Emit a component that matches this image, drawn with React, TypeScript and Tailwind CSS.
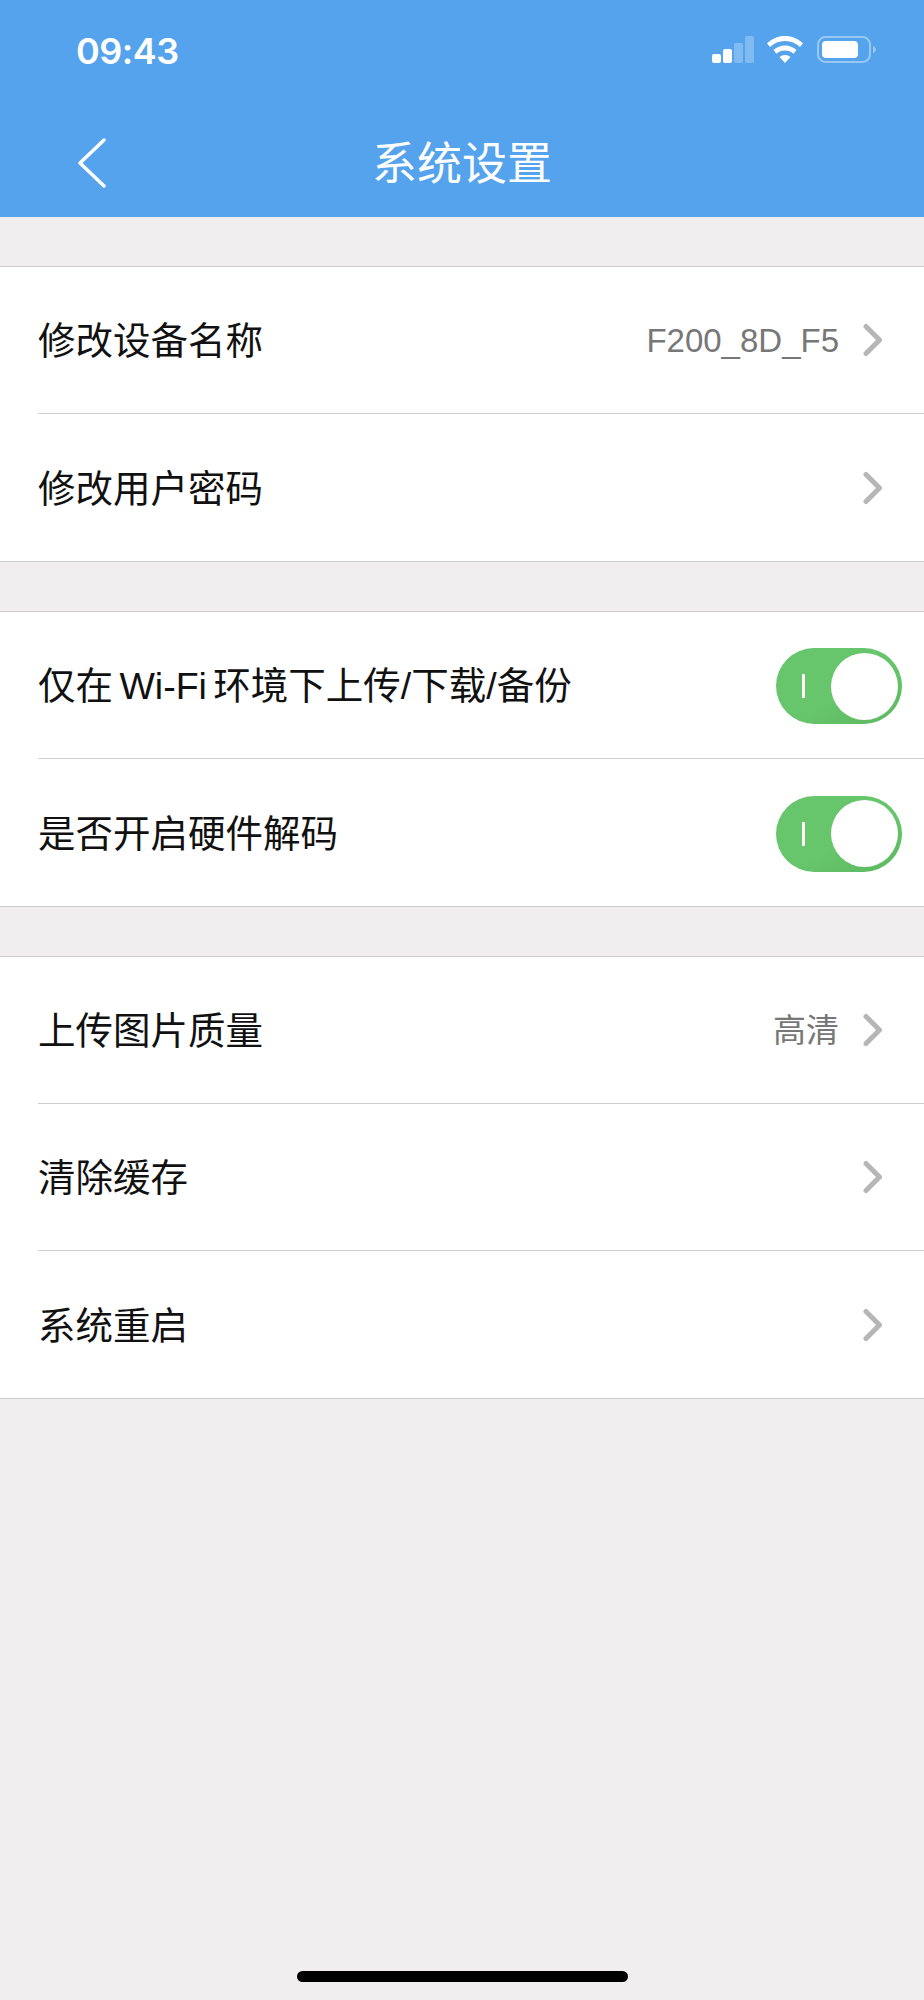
type Row = {
  label: string;
  value?: string;
  toggle?: boolean;
};

const groups: Row[][] = [
  [
    { label: "修改设备名称", value: "F200_8D_F5" },
    { label: "修改用户密码" },
  ],
  [
    { label: "仅在 Wi-Fi 环境下上传/下载/备份", toggle: true },
    { label: "是否开启硬件解码", toggle: true },
  ],
  [
    { label: "上传图片质量", value: "高清" },
    { label: "清除缓存" },
    { label: "系统重启" },
  ],
];

const font = "font-['Liberation_Sans','Noto_Sans_CJK_SC',sans-serif]";

function StatusIcons() {
  return (
    <div className="flex items-center">
      <svg width="42" height="28" viewBox="0 0 42 28" className="mr-[13px]">
        <rect x="0" y="18" width="9" height="9" rx="2" fill="#fff" />
        <rect x="11" y="13" width="9" height="14" rx="2" fill="#fff" />
        <rect x="22" y="7" width="9" height="20" rx="2" fill="#fff" fillOpacity="0.25" />
        <rect x="33" y="0" width="9" height="27" rx="2" fill="#fff" fillOpacity="0.25" />
      </svg>
      <svg width="36" height="28" viewBox="0 0 36 28" className="mr-[14px]">
        <path d="M18 0C11 0 5 2.600 0 7.300L3 11C7 7.200 12 5 18 5C24 5 29 7.200 33 11L36 7.300C31 2.600 25 0 18 0Z" fill="#fff" />
        <path d="M18 9.500C13.500 9.500 10 11 6.500 14L9.500 17.700C12 15.500 14.500 14.500 18 14.500C21.500 14.500 24 15.500 26.500 17.700L29.500 14C26 11 22.500 9.500 18 9.500Z" fill="#fff" />
        <path d="M18 19C15.800 19 14 19.700 12.500 21L18 27L23.500 21C22 19.700 20.200 19 18 19Z" fill="#fff" />
      </svg>
      <svg width="60" height="28" viewBox="0 0 60 28">
        <rect x="1" y="1" width="52" height="25" rx="7.500" fill="none" stroke="#fff" strokeOpacity="0.4" strokeWidth="2" />
        <rect x="5" y="5" width="36" height="17" rx="4" fill="#fff" />
        <path d="M56 10C58 10.800 59 12 59 13.500C59 15 58 16.200 56 17Z" fill="#fff" fillOpacity="0.4" />
      </svg>
    </div>
  );
}

function Toggle() {
  return (
    <div className="mt-[2px] flex h-[76px] w-[126px] items-center rounded-full bg-gradient-to-br from-[#67c56b] from-55% to-[#5cb860] pr-[4px] pl-[26px]">
      <div className="h-[24px] w-[3px] bg-white" />
      <div className="ml-auto h-[67px] w-[67px] rounded-full bg-white" />
    </div>
  );
}

function Chevron() {
  return (
    <svg width="20" height="34" viewBox="0 0 20 34" className="text-[#b6b6b6]">
      <path d="M3 3.500L16.500 17L3 30.500" fill="none" stroke="currentColor" strokeWidth="5" strokeLinecap="round" strokeLinejoin="round" />
    </svg>
  );
}

function SettingRow({ row, last }: { row: Row; last: boolean }) {
  return (
    <div className="pl-[38px]">
      <div
        className={`flex h-[147px] items-center ${row.toggle ? "pr-[22px]" : "pr-[41px]"} ${last ? "" : "border-b border-[#cdcdcd]"}`}
      >
        <span className="pt-[3px] text-[37.5px] text-[#111] [word-spacing:-4px]">{row.label}</span>
        <div className="ml-auto flex items-center">
          {row.value && (
            <span className="mr-[24px] pt-[2px] text-[33px] text-[#777]">{row.value}</span>
          )}
          {row.toggle ? <Toggle /> : <Chevron />}
        </div>
      </div>
    </div>
  );
}

export default function App() {
  return (
    <div className={`flex h-[2000px] w-[924px] flex-col bg-[#f0eeef] ${font}`}>
      <header className="h-[217px] bg-[#54a3ec] text-white">
        <div className="flex h-[100px] items-center justify-between pr-[47px] pl-[76px]">
          <span className="pt-[2px] font-['Inter',sans-serif] text-[36px] font-semibold tracking-[-0.5px]">09:43</span>
          <StatusIcons />
        </div>
        <div className="relative flex h-[117px] items-start justify-center">
          <svg width="32" height="52" viewBox="0 0 32 52" className="absolute top-[37px] left-[77px]">
            <path d="M27 3L3 26L27 49" fill="none" stroke="#fff" strokeWidth="3.500" strokeLinecap="round" strokeLinejoin="round" />
          </svg>
          <h1 className="pt-[31px] font-['Noto_Sans_CJK_SC',sans-serif] text-[45px] leading-[60px] font-normal">系统设置</h1>
        </div>
      </header>

      <main className="flex flex-col gap-[49px] pt-[49px]">
        {groups.map((group, i) => (
          <section key={i} className="border-y border-[#cdcdcd] bg-white">
            {group.map((row, j) => (
              <SettingRow key={row.label} row={row} last={j === group.length - 1} />
            ))}
          </section>
        ))}
      </main>

      <div className="mt-auto mb-[18px] flex justify-center">
        <div className="h-[11px] w-[331px] rounded-full bg-black" />
      </div>
    </div>
  );
}
